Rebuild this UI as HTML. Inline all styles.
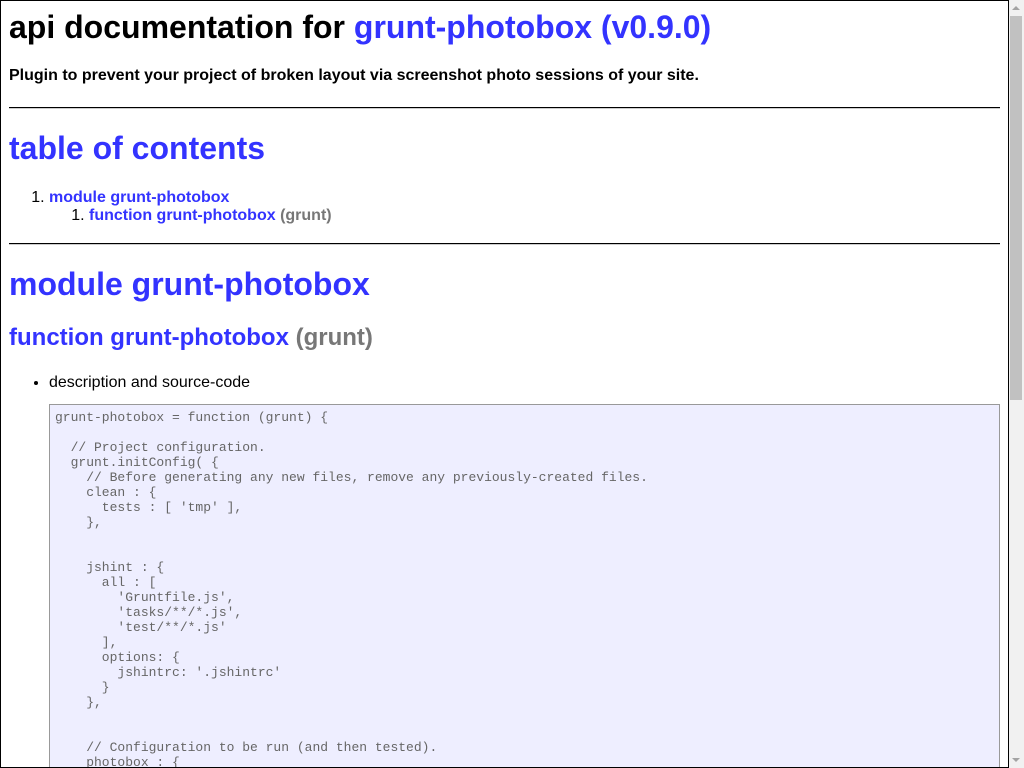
<!DOCTYPE html>
<html><head><meta charset="utf-8"><style>
html,body{margin:0;padding:0;overflow:hidden;height:768px;}
#frame{position:absolute;left:0;top:0;width:1007px;height:766px;border:1px solid #000;overflow:hidden;background:#fff;}
#sb{position:absolute;left:1009px;top:0;width:15px;height:768px;background:#f1f1f1;}
#sb .th{position:absolute;left:1px;top:16px;width:12px;height:384px;background:#c1c1c1;}
#sb .up{position:absolute;left:3px;top:6px;width:0;height:0;border-left:4px solid transparent;border-right:4px solid transparent;border-bottom:4px solid #a3a3a3;}
#sb .dn{position:absolute;left:3px;bottom:6px;width:0;height:0;border-left:4px solid transparent;border-right:4px solid transparent;border-top:4px solid #a3a3a3;}
.c{padding:0 8px;font-family:"Liberation Sans",sans-serif;color:#000;}
a{color:#33f;text-decoration:none;}
h1{font-size:32px;margin:21px 0;}
h1.first{margin-top:8px;}
h1.toch{margin-bottom:22px;}
h2{font-size:24px;margin:21px 0 22px;}
p{font-weight:bold;font-size:16px;margin:16px 0 22px;}
hr{border:0;border-top:1px solid #000;border-bottom:1px solid #ccc;margin:8px 0;}
.g{color:#777;}
ol,ul{margin:16px 0;padding-left:40px;font-size:16px;}
ol.toc{margin-bottom:18px;}
ol ol{margin:0;}
li::marker{font-weight:normal;}
.toc a,.toc .g{font-weight:bold;}
pre{background:#eef;border:1px solid #999;padding:5px 5px;font-family:"Liberation Mono",monospace;font-size:13px;line-height:15px;color:#666;margin:12px 0 0 0;white-space:pre;overflow:hidden;}
</style></head><body>
<div id="frame"><div class="c">
<h1 class="first">api documentation for <a>grunt-photobox (v0.9.0)</a></h1>
<p>Plugin to prevent your project of broken layout via screenshot photo sessions of your site.</p>
<hr>
<h1 class="toch"><a>table of contents</a></h1>
<ol class="toc"><li><a>module grunt-photobox</a><ol><li><a>function grunt-photobox</a> <span class="g">(grunt)</span></li></ol></li></ol>
<hr>
<h1><a>module grunt-photobox</a></h1>
<h2><a>function grunt-photobox</a> <span class="g">(grunt)</span></h2>
<ul><li>description and source-code<pre>grunt-photobox = function (grunt) {

  // Project configuration.
  grunt.initConfig( {
    // Before generating any new files, remove any previously-created files.
    clean : {
      tests : [ 'tmp' ],
    },


    jshint : {
      all : [
        'Gruntfile.js',
        'tasks/**/*.js',
        'test/**/*.js'
      ],
      options: {
        jshintrc: '.jshintrc'
      }
    },


    // Configuration to be run (and then tested).
    photobox : {
      task : {
        options : {
</pre></li></ul>
</div></div>
<div id="sb"><div class="up"></div><div class="th"></div><div class="dn"></div></div>
</body></html>
